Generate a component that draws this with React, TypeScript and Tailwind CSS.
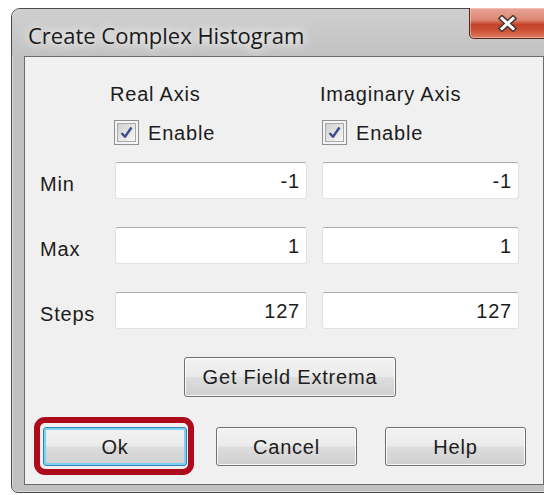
import React from "react";

type Row = {
  label: string;
  real: string;
  imag: string;
};

const rows: Row[] = [
  { label: "Min", real: "-1", imag: "-1" },
  { label: "Max", real: "1", imag: "1" },
  { label: "Steps", real: "127", imag: "127" },
];

const ui = "font-['Liberation_Sans',Arial,sans-serif] text-[20px] leading-[24px] tracking-[0.8px] text-[#1c1c1c]";

function CheckBox() {
  return (
    <div className="w-[25px] h-[25px] border border-[#8e8f8f] bg-[#f4f4f4] p-[2px]">
      <div className="w-full h-full border border-[#a9a9a9] bg-[linear-gradient(135deg,#cfcfcf_0%,#e8e8e8_60%,#f6f6f6_100%)] flex items-center justify-center">
        <svg width="15" height="15" viewBox="0 0 15 15">
          <path d="M2.5 8 L6 11.8 L12.5 2.5" fill="none" stroke="#3b4f8f" strokeWidth="2.4" strokeLinejoin="round" />
        </svg>
      </div>
    </div>
  );
}

function Field({ value, width }: { value: string; width: string }) {
  return (
    <div className={`${width} h-[37px] bg-white border border-[#dfe3e9] border-t-[#abadb3] rounded-[3px] flex items-center justify-end pr-[6px] ${ui}`}>
      {value}
    </div>
  );
}

function Button({ label, className, isDefault }: { label: string; className: string; isDefault?: boolean }) {
  return (
    <div
      className={`${className} relative rounded-[3px] border flex items-center justify-center bg-[linear-gradient(#f2f2f2_0%,#ebebeb_48%,#dddddd_52%,#cfcfcf_100%)] ${ui} ${
        isDefault
          ? "border-[#3c7fb1] shadow-[inset_0_0_0_2px_#78d3f5]"
          : "border-[#707070] shadow-[inset_0_0_0_1px_rgba(255,255,255,0.85)]"
      }`}
    >
      {label}
      {isDefault && (
        <span className="absolute -left-[10px] -top-[11px] -right-[8px] -bottom-[10px] border-[6px] border-[#ad0b1c] rounded-[11px]" />
      )}
    </div>
  );
}

export default function App() {
  return (
    <div className="w-[544px] h-[495px] bg-white overflow-hidden pt-[8px] pl-[11px]">
      <div className="relative w-[560px] h-[485px] rounded-t-[9px] rounded-b-[7px] border border-[#4a4a4a] bg-[#c0c0c0] shadow-[inset_0_0_0_1px_rgba(255,255,255,0.45)] flex flex-col">
        {/* title bar */}
        <div className="h-[47px] flex items-center pl-[16px] pt-[4px] bg-[linear-gradient(#cfcfcf,#c2c2c2)] rounded-t-[8px]">
          <span className="font-['Open_Sans',Arial,sans-serif] text-[22px] leading-[26px] text-[#1a1a1a] [text-shadow:0_0_10px_#ffffff,0_0_16px_#ffffff]">
            Create Complex Histogram
          </span>
        </div>

        {/* close button */}
        <div className="absolute left-[457px] -top-px w-[95px] h-[31px] rounded-b-[5px] border border-t-0 border-[#5a2519] bg-[linear-gradient(#e8a597_0%,#dc8672_40%,#c4432a_55%,#c94b30_70%,#dc7a62_100%)] shadow-[inset_0_0_0_1px_rgba(255,220,210,0.5)] flex pl-[27px] pt-[7px]">
          <svg width="21" height="17" viewBox="0 0 21 17">
            <path d="M5 3.5 L16 13.5 M16 3.5 L5 13.5" stroke="#4d3a36" strokeWidth="6" strokeLinecap="square" />
            <path d="M5 3.5 L16 13.5 M16 3.5 L5 13.5" stroke="#ffffff" strokeWidth="3" strokeLinecap="square" />
          </svg>
        </div>

        {/* client area */}
        <div className="ml-[12px] w-[520px] h-[429px] border border-[#6b6b6b] bg-[#f0f0f0] pl-[15px] pt-[25px] flex flex-col">
          <div className="grid grid-cols-[60px_192px_197px] gap-x-[15px]">
            <div />
            <div className={`-ml-[5px] ${ui}`}>Real Axis</div>
            <div className={`-ml-[2px] ${ui}`}>Imaginary Axis</div>
          </div>

          <div className="grid grid-cols-[60px_192px_197px] gap-x-[15px] mt-[14px]">
            <div />
            <div className="-ml-[1px] flex items-center gap-[9px]">
              <CheckBox />
              <span className={ui}>Enable</span>
            </div>
            <div className="flex items-center gap-[9px]">
              <CheckBox />
              <span className={ui}>Enable</span>
            </div>
          </div>

          <div className="flex flex-col gap-[28px] mt-[17px]">
            {rows.map((r) => (
              <div key={r.label} className="grid grid-cols-[60px_192px_197px] gap-x-[15px] items-center">
                <span className={`pt-[6px] ${ui}`}>{r.label}</span>
                <Field value={r.real} width="w-[192px]" />
                <Field value={r.imag} width="w-[197px]" />
              </div>
            ))}
          </div>

          <div className="mt-[28px] ml-[144px]">
            <Button label="Get Field Extrema" className="w-[212px] h-[40px]" />
          </div>

          <div className="mt-[30px] ml-[3px] flex gap-[29px]">
            <Button label="Ok" className="w-[144px] h-[39px]" isDefault />
            <Button label="Cancel" className="w-[141px] h-[39px]" />
            <Button label="Help" className="w-[141px] h-[39px] -ml-px" />
          </div>
        </div>
      </div>
    </div>
  );
}
